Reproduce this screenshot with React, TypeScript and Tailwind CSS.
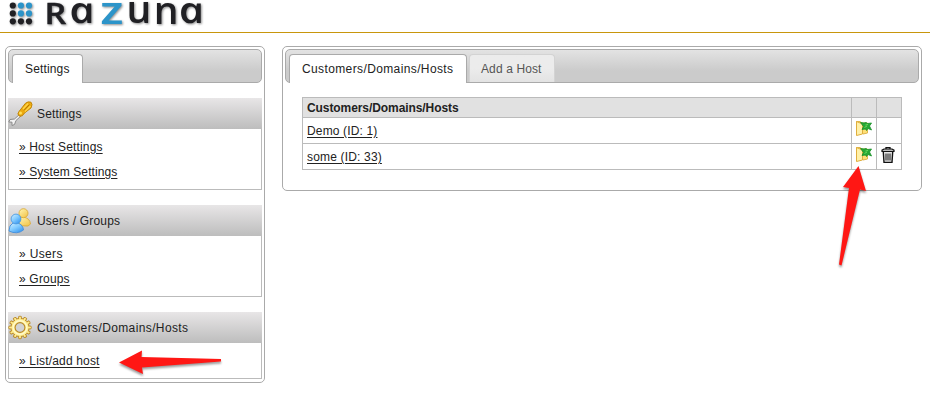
import type { ReactNode } from "react";

function Logo() {
  const dots = [
    ["#202024", "#2c94c9", "#2c94c9"],
    ["#202024", "#2c94c9", "#2c94c9"],
    ["#202024", "#202024", "#202024"],
  ];
  return (
    <svg width="220" height="32" viewBox="0 0 220 32" className="overflow-visible drop-shadow-[1px_1px_1px_rgba(0,0,0,0.45)]" fontFamily='"Open Sans", sans-serif' fill="#202024">
      {dots.map((row, y) => row.map((c, x) => <circle key={`${x}-${y}`} cx={12.8 + x * 8.1} cy={5.5 + y * 7.9} r="3.1" fill={c} />))}
      <text transform="translate(44.5 23.5) scale(1.22 1.01)" fontSize="28" fontWeight="600" stroke="#202024" strokeWidth=".4">R</text>
      <text transform="translate(71.8 23) scale(1.12 .93) skewX(12)" fontSize="39" fontWeight="600" fontStyle="italic">a</text>
      <text transform="translate(101 23.5) scale(1.34 1.01)" fontSize="28" fontWeight="700" fill="#2c94c9">Z</text>
      <text transform="translate(126.500 23.2) scale(1 .95)" fontSize="39" fontWeight="600">u</text>
      <text transform="translate(153.8 23.5) scale(1 .95)" fontSize="39" fontWeight="600">n</text>
      <text transform="translate(181.300 23) scale(1.12 .93) skewX(12)" fontSize="39" fontWeight="600" fontStyle="italic">a</text>
    </svg>
  );
}

function ScrewdriverIcon() {
  return (
    <svg width="26" height="26" viewBox="0 0 26 26" className="shrink-0">
      <path d="M12.500 12.500L6.500 18L2 18.500L0.800 21L4 21.200L4 24.500L6.500 23.500L8 19.500L13.500 14.500Z" fill="#f2f2f2" stroke="#8b8b8b" />
      <path d="M13 8L17.500 2.200Q20 .2 23 1.200Q25 3 23 7L16.500 12Q14.500 16 11.500 15.200Q8.500 13 11 10.500Z" fill="#edaa10" stroke="#c28608" />
      <path d="M15 8L20 2.500M17 10.500L22.500 5" stroke="#ffd649" strokeWidth="1.2" />
      <path d="M16 9.300L21.500 3.500" stroke="#b57500" />
      <circle cx="12.500" cy="12" r="1.500" fill="#ffe05a" />
    </svg>
  );
}

function UsersIcon() {
  return (
    <svg width="26" height="26" viewBox="0 0 26 26" className="shrink-0">
      <defs>
        <linearGradient id="userBlue" x2=".8" y2="1"><stop stopColor="#d5f1ff" /><stop offset=".5" stopColor="#84ccff" /><stop offset="1" stopColor="#3394ef" /></linearGradient>
        <linearGradient id="userGold" x2=".8" y2="1"><stop stopColor="#fff7b7" /><stop offset="1" stopColor="#f3c54b" /></linearGradient>
      </defs>
      <path d="M10 14Q11 9 15 9Q22 10 22.500 16L20 18Q14 19 10 15Z" fill="url(#userGold)" stroke="#dbab3c" strokeWidth=".9" />
      <circle cx="15.500" cy="5.200" r="4.500" fill="url(#userGold)" stroke="#dbab3c" strokeWidth=".9" />
      <path d="M1 23Q1 17 5 15H10Q15 17 15.500 22Q9 27 1 23Z" fill="url(#userBlue)" stroke="#438fdd" strokeWidth=".9" />
      <circle cx="8" cy="11" r="4.900" fill="url(#userBlue)" stroke="#4c9ae2" strokeWidth=".9" />
    </svg>
  );
}

function GearIcon() {
  return (
    <svg width="26" height="26" viewBox="0 0 26 26" className="shrink-0">
      <circle cx="12" cy="12.500" r="9.200" fill="#ffec8f" stroke="#b8892b" />
      {[0, 30, 60, 90, 120, 150, 180, 210, 240, 270, 300, 330].map((a) => (
        <path key={a} d="M10.600 4.500V1.600Q12 .7 13.400 1.600V4.500" transform={`rotate(${a} 12 12.500)`} fill="#ffec8f" stroke="#b8892b" strokeWidth=".9" />
      ))}
      <circle cx="12" cy="12.500" r="8.500" fill="#ffec8f" />
      <circle cx="12" cy="12.500" r="6.800" fill="none" stroke="#fffac9" strokeWidth="1.500" />
      <circle cx="12" cy="12.500" r="4.900" fill="#d3d3d3" stroke="#b8892b" strokeWidth="1.100" />
    </svg>
  );
}

function FolderIcon() {
  return (
    <svg width="18" height="18" viewBox="0 0 18 18">
      <path d="M1.500 1.500H5L7 3H12.500V13L8 14Z" fill="#ffdf75" stroke="#dfb64e" />
      <path d="M1.500 1.500L7.500 4V14L1.500 15.500Z" fill="#fff0a8" stroke="#dfae3d" />
      <path d="M5.500 2.500L9 3L11 2.500L12.500 3.500L16.500 3L14.500 6L16.500 10L13 8.500L11.500 10.500L10.500 9L7 9.500L8.500 6.500Z" fill="#27a835" stroke="#159026" strokeWidth=".8" />
      <path d="M10.500 5L13 4.500M9.500 7.500L12 6" stroke="#6bda5b" />
    </svg>
  );
}

function TrashIcon() {
  return (
    <svg width="14" height="18" viewBox="0 0 14 18" fill="none" stroke="#111">
      <path d="M5 2V.7H9V2" strokeWidth="1.300" />
      <path d="M1 4.500V3.200L3 2H11L13 3.200V4.500Z" fill="#bbb" strokeWidth="1.200" />
      <path d="M2.300 5L3 15.400H11L11.700 5" fill="#e6e6e6" strokeWidth="1.400" />
      <path d="M5 6.500V13.500M7 6.500V13.500M9 6.500V13.500" strokeWidth="1" />
    </svg>
  );
}

function Section({ title, icon, links }: { title: ReactNode; icon: ReactNode; links: ReactNode[] }) {
  return (
    <section>
      <h2 className="flex h-[31px] items-center gap-[3px] bg-linear-to-b from-[#e8e6e7] to-[#bdbdbd]">
        {icon}{title}
      </h2>
      <div className="flex flex-col items-start border border-t-0 border-[#bbb] px-2.5 pt-[5px] pb-[5px]">
        {links.map((link, i) => (
          <a key={i} className="flex h-[25px] items-center underline underline-offset-2">{link}</a>
        ))}
      </div>
    </section>
  );
}

const bar = "flex h-[34px] items-end rounded-[5px] border border-[#aaa] bg-linear-to-b from-[#e3e3e3] via-[#cbcbcb] via-65% to-[#cbcbcb] pl-[3px]";
const tab = "-mb-px flex h-[29px] items-center rounded-t-[4px] border border-b-0 border-[#aaa] bg-white";

export default function App() {
  return (
    <div className="relative h-[404px] w-[930px] overflow-hidden bg-white font-['Liberation_Sans',Arial,sans-serif] text-[12px] leading-[14px] text-[#222]">
      <header className="h-[33px] border-b border-[#c8960c]"><Logo /></header>
      <main className="flex items-start gap-[17px] pt-[13px] pl-[5px]">
        <aside className="w-[260px] rounded-[5px] border border-[#aaa] p-0.5 pb-[3px]">
          <nav className={bar}>
            <div className={`${tab} w-[71px] pl-3 tracking-[0.15px]`}>Settings</div>
          </nav>
          <div className="mt-[15px] flex flex-col gap-[15px]">
            <Section
              title={<span className="tracking-[0.15px]">Settings</span>}
              icon={<ScrewdriverIcon />}
              links={[<span className="tracking-[0.15px]">» Host Settings</span>, <span className="tracking-[0.1px]">» System Settings</span>]}
            />
            <Section
              title={<span className="tracking-[0.18px]">Users / Groups</span>}
              icon={<UsersIcon />}
              links={[<span className="tracking-[0.35px]">» Users</span>, <span className="tracking-[0.18px]">» Groups</span>]}
            />
            <Section
              title={<span className="tracking-[0.38px]">Customers/Domains/Hosts</span>}
              icon={<GearIcon />}
              links={[<span className="tracking-[0.17px]">» List/add host</span>]}
            />
          </div>
        </aside>
        <section className="h-[145px] w-[640px] rounded-[5px] border border-[#aaa] p-0.5">
          <nav className={bar}>
            <div className={`${tab} w-[178px] pl-3 tracking-[0.38px]`}>Customers/Domains/Hosts</div>
            <div className="ml-0.5 flex h-7 w-[86px] items-center rounded-t-[4px] border border-b-0 border-[#d3d3d3] bg-linear-to-b from-[#ececec] from-50% to-[#e3e3e3] pl-[11px] tracking-[0.12px] text-[#555]">Add a Host</div>
          </nav>
          <table className="mt-3.5 ml-[17px] w-[600px] table-fixed border-collapse border border-[#bbb] [&_td]:border [&_td]:border-[#bbb] [&_th]:border [&_th]:border-[#bbb]">
            <colgroup><col className="w-[549px]" /><col className="w-[25px]" /><col className="w-[25px]" /></colgroup>
            <thead><tr className="h-5 bg-[#e1e1e1] text-left"><th className="pl-1 tracking-[-0.08px]">Customers/Domains/Hosts</th><th /><th /></tr></thead>
            <tbody>
              <tr className="h-[26px]"><td className="pl-1 tracking-[0.15px] underline underline-offset-2">Demo (ID: 1)</td><td><div className="flex h-[22px] items-start pl-[3px]"><FolderIcon /></div></td><td /></tr>
              <tr className="h-[26px]"><td className="pl-1 tracking-[0.17px] underline underline-offset-2">some (ID: 33)</td><td><div className="flex h-[22px] items-start pl-[3px]"><FolderIcon /></div></td><td><div className="flex h-5 items-start pl-1"><TrashIcon /></div></td></tr>
            </tbody>
          </table>
        </section>
      </main>
      <svg className="pointer-events-none absolute inset-0 drop-shadow-[0_2px_1px_rgba(0,0,0,0.4)]" width="930" height="404" fill="#ff1714">
        <path d="M119 362.500L142 350.500L141.500 357L221 359V361.500L142 367.500L143 374Z" />
        <path d="M858.500 166L866 191L860 189.500L841.500 265.500L839 264.500L849 188L843 187Z" />
      </svg>
    </div>
  );
}
